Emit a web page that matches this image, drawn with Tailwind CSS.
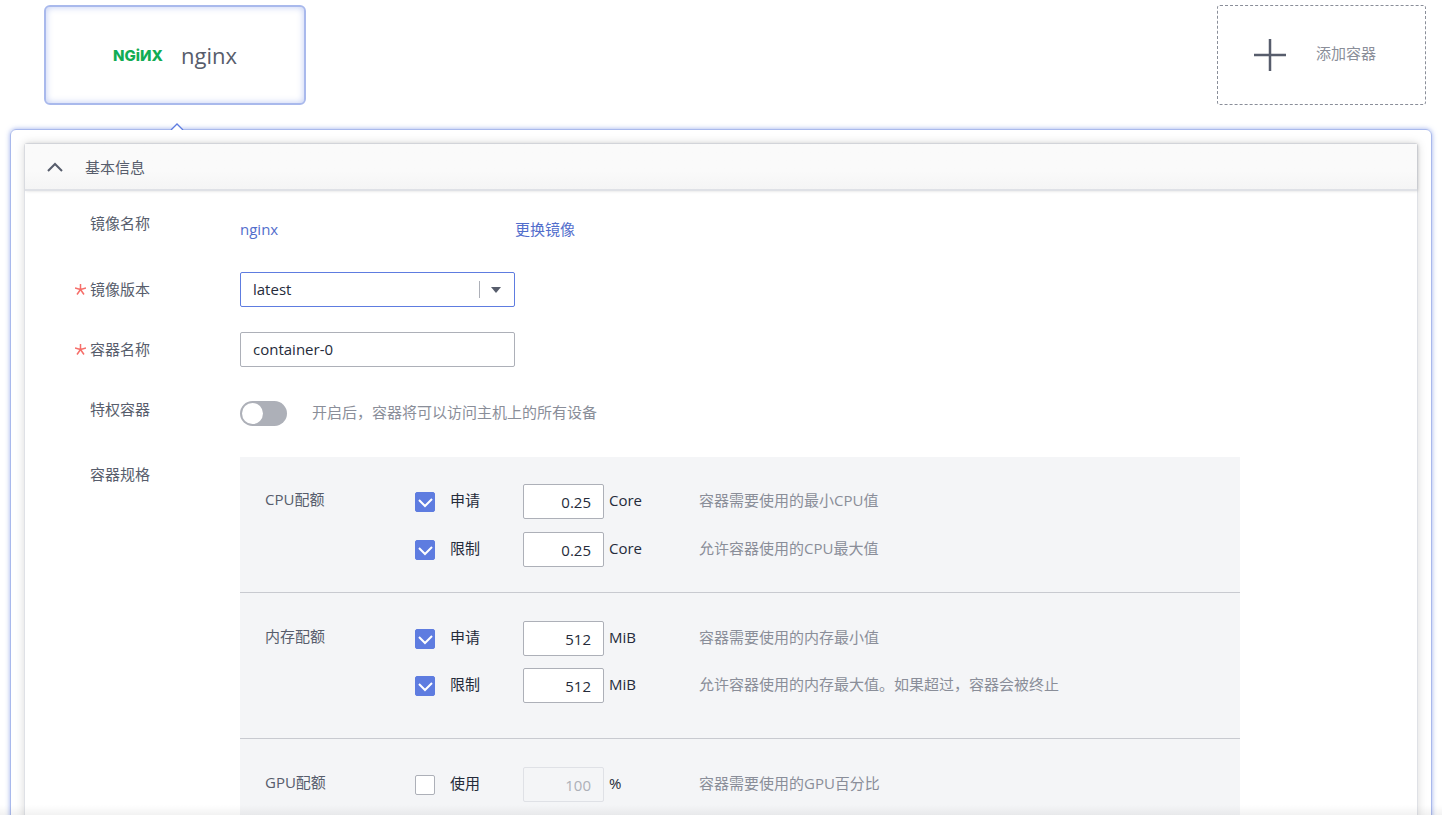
<!DOCTYPE html>
<html lang="zh-CN">
<head>
  <meta charset="UTF-8">
  <meta name="viewport" content="width=device-width, initial-scale=1">
  <title>容器设置</title>
  <script src="https://cdn.jsdelivr.net/npm/@tailwindcss/browser@4"></script>
</head>
<body class="relative h-screen overflow-hidden bg-white pb-0.5 font-['Open_Sans','Noto_Sans_CJK_SC',sans-serif] text-[15px] leading-6 text-[#575d6c]">

  <div class="h-full overflow-hidden">

    <!-- 容器卡片 -->
    <header class="flex justify-between pt-[5px] pr-4 pl-11">
      <button type="button" class="flex h-[100px] w-[262px] items-center justify-center gap-[18px] rounded-md border-2 border-[#a9b9ec] inset-shadow-[0_0_7px_#5e7ce066]">
        <span class="pt-0.5 font-['Inter',sans-serif] text-[15px] font-extrabold text-[#12ac54]">NGiИX</span>
        <span class="text-[22px]">nginx</span>
      </button>
      <button type="button" class="flex h-[100px] w-[209px] items-center gap-[30px] rounded-[3px] border border-dashed border-[#8a8e99] pl-9 text-[#8a8e99]">
        <svg class="size-8" viewBox="0 0 32 32" fill="none" stroke="#575d6c" stroke-width="2.500"><path d="M0 16h32M16 0v32"/></svg>
        <span class="pb-1">添加容器</span>
      </button>
    </header>

    <main class="relative mx-2.5 mt-6 rounded-md border border-[#a9b9ec] p-[13px] shadow-[0_0_5px_#5e7ce099]">
      <svg class="absolute -top-2 left-[158px] h-2 w-4" viewBox="0 0 16 8"><path d="M2 8L8 2l6 6" fill="#fff" stroke="#5e7ce0" stroke-width="1.300"/></svg>

      <section class="rounded-[3px] border border-[#dfe1e6] bg-white shadow-[0_0_10px_#00000026]">
        <!-- 基本信息 -->
        <h2>
          <button type="button" class="flex h-[47px] w-full items-center gap-[22px] border-b-2 border-[#dfe1e6] bg-linear-to-b from-[#fafafa] from-60% to-[#f5f5f5] pl-[22px] shadow-[1px_0_3px_#00000026]">
            <svg class="h-4 w-4" viewBox="0 0 16 16" fill="none" stroke="#575d6c" stroke-width="2"><path d="M1 12l7-7 7 7"/></svg>
            基本信息
          </button>
        </h2>

        <form class="pt-5 pr-5 pl-[50px]">
          <div class="flex h-[61px]">
            <span class="w-[165px] shrink-0 pl-[15px]">镜像名称</span>
            <div class="flex pt-1.5 text-[#526ecc]">
              <a href="#" class="w-[275px]">nginx</a>
              <a href="#">更换镜像</a>
            </div>
          </div>

          <div class="flex h-[60px]">
            <label for="version" class="flex w-[165px] shrink-0 gap-1 pt-[5px]">
              <svg class="mt-[7px] size-[11px]" viewBox="0 0 11 11" stroke="#f66f6a" stroke-width="1.500"><path d="M5.500 0v5.500M0 4l5.500 1.500M11 4L5.500 5.500M2 10.500l3.500-5M9 10.500l-3.500-5"/></svg>
              镜像版本
            </label>
            <div class="relative h-[35px] w-[275px]">
              <select id="version" class="h-full w-full appearance-none rounded-xs border border-[#5e7ce0] bg-white px-3 pb-0.5 text-[#252b3a]">
                <option>latest</option>
              </select>
              <div class="pointer-events-none absolute inset-y-0 right-[13px] flex items-center gap-2.5">
                <span class="h-[17px] w-px bg-[#adb0b8]"></span>
                <svg class="h-1.5 w-3" viewBox="0 0 12 6"><path d="M1 0h10L6 6z" fill="#575d6c"/></svg>
              </div>
            </div>
          </div>

          <div class="flex h-[60px]">
            <label for="name" class="flex w-[165px] shrink-0 gap-1 pt-[5px]">
              <svg class="mt-[7px] size-[11px]" viewBox="0 0 11 11" stroke="#f66f6a" stroke-width="1.500"><path d="M5.500 0v5.500M0 4l5.500 1.500M11 4L5.500 5.500M2 10.500l3.500-5M9 10.500l-3.500-5"/></svg>
              容器名称
            </label>
            <input id="name" type="text" value="container-0" class="h-[35px] w-[275px] rounded-xs border border-[#adb0b8] px-3 pb-0.5 text-[#252b3a]">
          </div>

          <div class="flex h-[65px]">
            <label for="privileged" class="w-[165px] shrink-0 pt-[5px] pl-[15px]">特权容器</label>
            <div class="flex gap-[25px] pt-2">
              <input id="privileged" type="checkbox" role="switch" class="mt-px h-[25px] w-[47px] appearance-none rounded-full bg-[#adb0b8] p-0.5 before:block before:size-[21px] before:rounded-full before:bg-white checked:bg-[#5e7ce0] checked:before:ml-[22px]">
              <span class="text-[#8a8e99]">开启后，容器将可以访问主机上的所有设备</span>
            </div>
          </div>

          <div class="flex">
            <span class="w-[165px] shrink-0 pt-[5px] pl-[15px]">容器规格</span>

            <!-- 配额 -->
            <div class="w-full max-w-[1000px] divide-y divide-[#c8cad0] bg-[#f4f5f7]">
              <fieldset class="flex pt-[27px] pb-[25px] pl-[25px]">
                <div class="w-[150px] shrink-0 pt-[3px]">CPU配额</div>
                <div class="grow space-y-[13px] text-[#252b3a]">
                  <div class="flex h-[35px]">
                    <label class="relative flex w-[108px] gap-[15px] pt-1">
                      <input type="checkbox" checked class="peer mt-1 size-5 appearance-none rounded-xs border border-[#adb0b8] bg-white checked:border-[#5e7ce0] checked:bg-[#5e7ce0]">
                      <svg class="absolute top-2 left-0 hidden size-5 peer-checked:block" viewBox="0 0 20 20" fill="none" stroke="#fff" stroke-width="2"><path d="M4 8l6 6 7-7"/></svg>
                      申请
                    </label>
                    <input type="text" value="0.25" aria-label="CPU申请" class="w-[81px] rounded-xs border border-[#adb0b8] bg-white px-3 text-right">
                    <span class="w-[95px] pt-1 pl-[5px]">Core</span>
                    <span class="pt-1 text-[#8a8e99]">容器需要使用的最小CPU值</span>
                  </div>
                  <div class="flex h-[35px]">
                    <label class="relative flex w-[108px] gap-[15px] pt-1">
                      <input type="checkbox" checked class="peer mt-1 size-5 appearance-none rounded-xs border border-[#adb0b8] bg-white checked:border-[#5e7ce0] checked:bg-[#5e7ce0]">
                      <svg class="absolute top-2 left-0 hidden size-5 peer-checked:block" viewBox="0 0 20 20" fill="none" stroke="#fff" stroke-width="2"><path d="M4 8l6 6 7-7"/></svg>
                      限制
                    </label>
                    <input type="text" value="0.25" aria-label="CPU限制" class="w-[81px] rounded-xs border border-[#adb0b8] bg-white px-3 text-right">
                    <span class="w-[95px] pt-1 pl-[5px]">Core</span>
                    <span class="pt-1 text-[#8a8e99]">允许容器使用的CPU最大值</span>
                  </div>
                </div>
              </fieldset>

              <fieldset class="flex pt-7 pb-[35px] pl-[25px]">
                <div class="w-[150px] shrink-0 pt-[3px]">内存配额</div>
                <div class="grow space-y-3 text-[#252b3a]">
                  <div class="flex h-[35px]">
                    <label class="relative flex w-[108px] gap-[15px] pt-1">
                      <input type="checkbox" checked class="peer mt-1 size-5 appearance-none rounded-xs border border-[#adb0b8] bg-white checked:border-[#5e7ce0] checked:bg-[#5e7ce0]">
                      <svg class="absolute top-2 left-0 hidden size-5 peer-checked:block" viewBox="0 0 20 20" fill="none" stroke="#fff" stroke-width="2"><path d="M4 8l6 6 7-7"/></svg>
                      申请
                    </label>
                    <input type="text" value="512" aria-label="内存申请" class="w-[81px] rounded-xs border border-[#adb0b8] bg-white px-3 text-right">
                    <span class="w-[95px] pt-1 pl-[5px]">MiB</span>
                    <span class="pt-1 text-[#8a8e99]">容器需要使用的内存最小值</span>
                  </div>
                  <div class="flex h-[35px]">
                    <label class="relative flex w-[108px] gap-[15px] pt-1">
                      <input type="checkbox" checked class="peer mt-1 size-5 appearance-none rounded-xs border border-[#adb0b8] bg-white checked:border-[#5e7ce0] checked:bg-[#5e7ce0]">
                      <svg class="absolute top-2 left-0 hidden size-5 peer-checked:block" viewBox="0 0 20 20" fill="none" stroke="#fff" stroke-width="2"><path d="M4 8l6 6 7-7"/></svg>
                      限制
                    </label>
                    <input type="text" value="512" aria-label="内存限制" class="w-[81px] rounded-xs border border-[#adb0b8] bg-white px-3 text-right">
                    <span class="w-[95px] pt-1 pl-[5px]">MiB</span>
                    <span class="pt-1 text-[#8a8e99]">允许容器使用的内存最大值。如果超过，容器会被终止</span>
                  </div>
                </div>
              </fieldset>

              <fieldset class="flex pt-7 pb-[35px] pl-[25px]">
                <div class="w-[150px] shrink-0 pt-[3px]">GPU配额</div>
                <div class="grow text-[#252b3a]">
                  <div class="flex h-[35px]">
                    <label class="relative flex w-[108px] gap-[15px] pt-1">
                      <input type="checkbox" class="peer mt-1 size-5 appearance-none rounded-xs border border-[#adb0b8] bg-white checked:border-[#5e7ce0] checked:bg-[#5e7ce0]">
                      <svg class="absolute top-2 left-0 hidden size-5 peer-checked:block" viewBox="0 0 20 20" fill="none" stroke="#fff" stroke-width="2"><path d="M4 8l6 6 7-7"/></svg>
                      使用
                    </label>
                    <input type="text" value="100" disabled aria-label="GPU使用" class="w-[81px] rounded-xs border border-[#dfe1e6] bg-[#f4f5f7] px-3 text-right text-[#adb0b8]">
                    <span class="w-[95px] pt-1 pl-[5px]">%</span>
                    <span class="pt-1 text-[#8a8e99]">容器需要使用的GPU百分比</span>
                  </div>
                </div>
              </fieldset>
            </div>
          </div>
        </form>
      </section>
    </main>
  </div>

  <!-- 底部阴影 -->
  <div class="pointer-events-none absolute inset-x-0 bottom-0.5 h-2.5 bg-linear-to-b from-transparent to-black/5"></div>

</body>
</html>
